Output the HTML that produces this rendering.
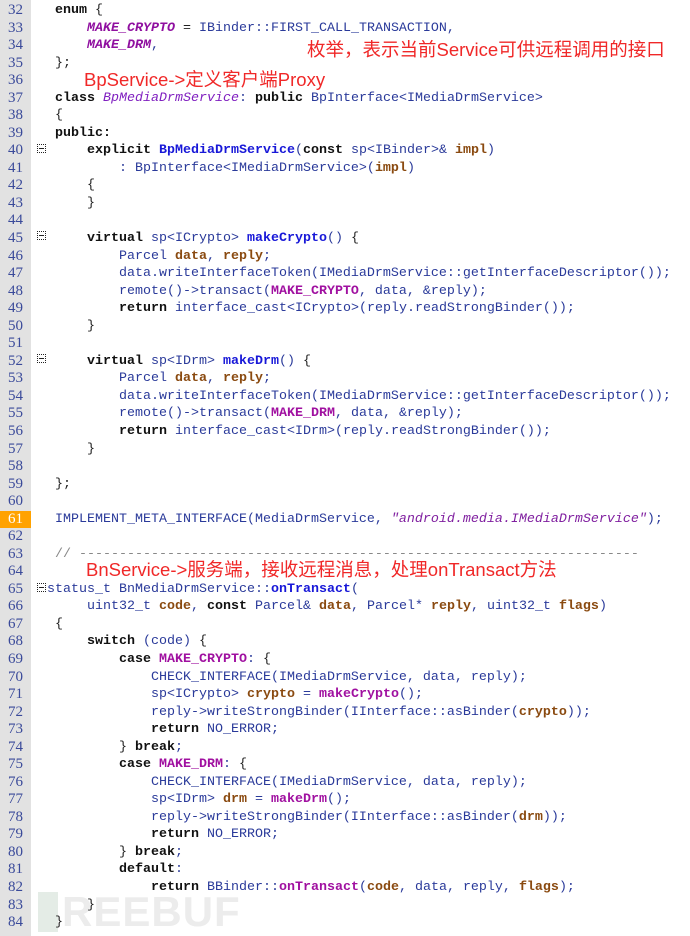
<!DOCTYPE html>
<html><head><meta charset="utf-8"><style>
html,body{margin:0;padding:0;background:#fff;width:690px;height:936px;overflow:hidden;position:relative}
#g{position:absolute;left:0;top:0;width:31px;height:936px;background:#e2e2e2}
.ln{position:absolute;left:0;width:31px;text-align:center;font:15px "Liberation Serif",serif;color:#3a4a9a;height:17.54px;line-height:17.54px}
.hl{background:#ffa200;color:#fff}
.c{position:absolute;left:55px;white-space:pre;font:13.33px "Liberation Mono",monospace;color:#2a3a9a;height:17.54px;line-height:17.54px}
.k{font-weight:bold;color:#111}
.o{color:#222}
.v{font-weight:bold;color:#8a4a10}
.f{font-weight:bold;color:#1818d8}
.m{font-weight:bold;color:#a010a0}
.e{font-weight:bold;font-style:italic;color:#9010a0}
.ci{font-style:italic;color:#8020c0}
.cb{font-weight:bold;color:#1818d8}
.s{font-style:italic;color:#8020a0}
.cm{color:#888}
.fold{position:absolute;left:37px;width:9px;height:9px;border:1px dotted #222;box-sizing:border-box}
.fold:after{content:"";position:absolute;left:1px;right:1px;top:3px;height:1px;background:#222}
.a{position:absolute;color:#f02828;font:18.5px "Liberation Sans","Noto Sans CJK SC",sans-serif;white-space:nowrap;line-height:22px}
.wm{position:absolute;left:62px;top:888px;font:bold 42px "Liberation Sans",sans-serif;color:#ececec;letter-spacing:1px}
.wb{position:absolute;left:38px;top:892px;width:20px;height:40px;background:#e4ece6}
</style></head><body>
<div id="g"></div>
<div class="wb"></div>
<div class="wm">REEBUF</div>
<div id="L"></div>
<div class="fold" style="top:144px"></div>
<div class="fold" style="top:231px"></div>
<div class="fold" style="top:354px"></div>
<div class="fold" style="top:583px"></div>
<div class="a" style="left:307px;top:39px">枚举，表示当前Service可供远程调用的接口</div>
<div class="a" style="left:84px;top:69px">BpService-&gt;定义客户端Proxy</div>
<div class="a" style="left:86px;top:559px">BnService-&gt;服务端，接收远程消息，处理onTransact方法</div>
<script>
var L=[
'<span class="k">enum</span> <span class="o">{</span>',
'    <span class="e">MAKE_CRYPTO</span> <span class="o">=</span> IBinder::FIRST_CALL_TRANSACTION,',
'    <span class="e">MAKE_DRM</span>,',
'<span class="o">};</span>',
'',
'<span class="k">class</span> <span class="ci">BpMediaDrmService</span>: <span class="k">public</span> BpInterface&lt;IMediaDrmService&gt;',
'<span class="o">{</span>',
'<span class="k">public:</span>',
'    <span class="k">explicit</span> <span class="cb">BpMediaDrmService</span>(<span class="k">const</span> sp&lt;IBinder&gt;&amp; <span class="v">impl</span>)',
'        : BpInterface&lt;IMediaDrmService&gt;(<span class="v">impl</span>)',
'    <span class="o">{</span>',
'    <span class="o">}</span>',
'',
'    <span class="k">virtual</span> sp&lt;ICrypto&gt; <span class="f">makeCrypto</span>() <span class="o">{</span>',
'        Parcel <span class="v">data</span>, <span class="v">reply</span>;',
'        data.writeInterfaceToken(IMediaDrmService::getInterfaceDescriptor());',
'        remote()-&gt;transact(<span class="m">MAKE_CRYPTO</span>, data, &amp;reply);',
'        <span class="k">return</span> interface_cast&lt;ICrypto&gt;(reply.readStrongBinder());',
'    <span class="o">}</span>',
'',
'    <span class="k">virtual</span> sp&lt;IDrm&gt; <span class="f">makeDrm</span>() <span class="o">{</span>',
'        Parcel <span class="v">data</span>, <span class="v">reply</span>;',
'        data.writeInterfaceToken(IMediaDrmService::getInterfaceDescriptor());',
'        remote()-&gt;transact(<span class="m">MAKE_DRM</span>, data, &amp;reply);',
'        <span class="k">return</span> interface_cast&lt;IDrm&gt;(reply.readStrongBinder());',
'    <span class="o">}</span>',
'',
'<span class="o">};</span>',
'',
'IMPLEMENT_META_INTERFACE(MediaDrmService, <span class="s">"android.media.IMediaDrmService"</span>);',
'',
'<span class="cm">// ----------------------------------------------------------------------</span>',
'',
'status_t BnMediaDrmService::<span class="f">onTransact</span>(',
'    uint32_t <span class="v">code</span>, <span class="k">const</span> Parcel&amp; <span class="v">data</span>, Parcel* <span class="v">reply</span>, uint32_t <span class="v">flags</span>)',
'<span class="o">{</span>',
'    <span class="k">switch</span> (code) <span class="o">{</span>',
'        <span class="k">case</span> <span class="m">MAKE_CRYPTO</span>: <span class="o">{</span>',
'            CHECK_INTERFACE(IMediaDrmService, data, reply);',
'            sp&lt;ICrypto&gt; <span class="v">crypto</span> = <span class="m">makeCrypto</span>();',
'            reply-&gt;writeStrongBinder(IInterface::asBinder(<span class="v">crypto</span>));',
'            <span class="k">return</span> NO_ERROR;',
'        <span class="o">}</span> <span class="k">break</span>;',
'        <span class="k">case</span> <span class="m">MAKE_DRM</span>: <span class="o">{</span>',
'            CHECK_INTERFACE(IMediaDrmService, data, reply);',
'            sp&lt;IDrm&gt; <span class="v">drm</span> = <span class="m">makeDrm</span>();',
'            reply-&gt;writeStrongBinder(IInterface::asBinder(<span class="v">drm</span>));',
'            <span class="k">return</span> NO_ERROR;',
'        <span class="o">}</span> <span class="k">break</span>;',
'        <span class="k">default</span>:',
'            <span class="k">return</span> BBinder::<span class="m">onTransact</span>(<span class="v">code</span>, data, reply, <span class="v">flags</span>);',
'    <span class="o">}</span>',
'<span class="o">}</span>'
];
var h='';
for(var i=0;i<L.length;i++){
 var t=(2+i*17.54).toFixed(2);
 var n=32+i;
 h+='<div class="ln'+(n==61?' hl':'')+'" style="top:'+t+'px">'+n+'</div>';
 var left=(n==65)?47:55;
 h+='<div class="c" style="top:'+t+'px;left:'+left+'px">'+L[i]+'</div>';
}
document.getElementById('L').innerHTML=h;
</script>
</body></html>
